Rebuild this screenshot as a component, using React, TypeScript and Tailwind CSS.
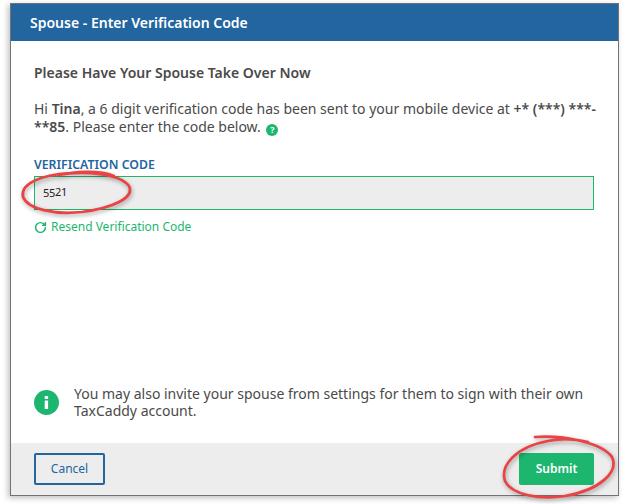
import { RotateCw } from "lucide-react";

// hand drawn red circles that sit on top of the screenshot
function Scribbles() {
  return (
    <svg className="absolute inset-0 pointer-events-none" width="622" height="504" viewBox="0 0 622 504" fill="none">
      <g style={{ filter: "drop-shadow(1px 2px 2px rgba(0,0,0,0.35))" }}>
        <path
          d="M58 175 C85 170 120 174 129 186 C135 198 112 208 82 212 C54 215 28 209 23 197 C20 184 40 175 70 173 C88 171 104 172 114 176"
          stroke="#e94343"
          strokeWidth="2.75"
          strokeLinecap="round"
        />
        <path
          d="M535 437 C565 435 602 443 612 457 C619 472 600 490 565 496 C540 500 512 495 505 481 C500 466 515 447 548 441 C560 438 575 439 588 442"
          stroke="#e94343"
          strokeWidth="2.75"
          strokeLinecap="round"
        />
      </g>
    </svg>
  );
}

export default function App() {
  return (
    <div className="relative h-[504px] w-[622px] overflow-hidden bg-white pl-[10px] pt-[3px] font-['Noto_Sans',sans-serif]">
      <div className="flex h-[493px] w-[609px] flex-col border border-[#737373] bg-white shadow-[-2px_2px_6px_rgba(0,0,0,0.25)]">
        <header className="flex h-[37px] items-center bg-[#22659f] pl-[19px] text-[14px] font-semibold text-white">
          Spouse - Enter Verification Code
        </header>

        <div className="flex flex-1 flex-col justify-between px-[23px] pb-[24px] pt-[23px] text-[#4a4a4a]">
          <div>
            <h2 className="text-[14px] font-semibold leading-[18px]">Please Have Your Spouse Take Over Now</h2>
            <p className="mt-[18px] w-[562px] text-[14px] leading-[18px]">
              Hi <b className="font-semibold">Tina</b>, a 6 digit verification code has been sent to your mobile device at{" "}
              <b className="font-semibold">+* (***) ***-**85</b>. Please enter the code below.{" "}
              <span className="ml-[2px] inline-grid h-[12px] w-[12px] place-items-center rounded-full bg-[#1cb66f] align-[-1px] text-[9px] font-bold leading-none text-white">
                ?
              </span>
            </p>
            <label className="mt-[21px] block text-[12.3px] font-semibold leading-[16px] text-[#22659f]">VERIFICATION CODE</label>
            <div className="mt-[3px] flex h-[34px] w-[560px] items-center border border-[#1cb66f] bg-[#ededed] pl-[8px] text-[11px] tracking-[-0.3px] text-[#222]">
              <span>55</span>
              <span className="-translate-y-[1px]">21</span>
            </div>
            <button type="button" className="mt-[8px] flex items-center gap-[4px] text-[12px] leading-[18px] text-[#1cb66f]">
              <RotateCw className="h-[13px] w-[13px]" strokeWidth={2.75} />
              Resend Verification Code
            </button>
          </div>

          <div className="flex items-center gap-[15px]">
            <div className="grid h-[25px] w-[25px] shrink-0 place-items-center rounded-full bg-[#1cb66f]">
              <svg width="5" height="13" viewBox="0 0 5 13" fill="white">
                <rect x="0.7" y="0" width="3.4" height="3" rx="0.5" />
                <rect x="0.7" y="4.6" width="3.4" height="8.4" rx="0.5" />
              </svg>
            </div>
            <p className="text-[14px] leading-[17px]">
              You may also invite your spouse from settings for them to sign with their own TaxCaddy account.
            </p>
          </div>
        </div>

        <footer className="flex h-[52px] items-center justify-between bg-[#ededed] pl-[23px] pr-[24px]">
          <button type="button" className="h-[32px] w-[71px] rounded-[2px] border-2 border-[#22659f] text-[12px] text-[#22659f]">
            Cancel
          </button>
          <button type="button" className="h-[32px] w-[75px] rounded-[2px] bg-[#1cb66f] text-[12px] font-semibold text-white">
            Submit
          </button>
        </footer>
      </div>
      <Scribbles />
    </div>
  );
}
